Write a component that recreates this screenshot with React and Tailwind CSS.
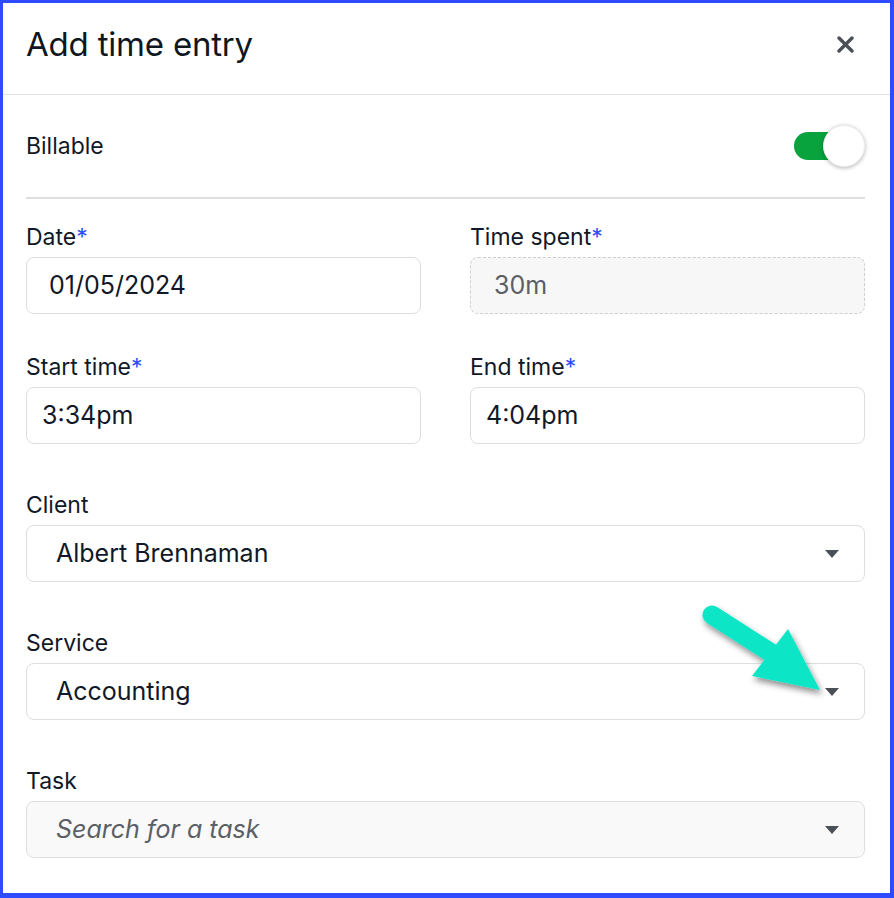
function Label({ children, required }) {
  return (
    <div className="text-[23px] leading-[28px] text-[#111827] mb-[6px]">
      {children}
      {required && <span className="text-[#2f4bff]">*</span>}
    </div>
  );
}

function Caret() {
  return (
    <svg width="14" height="8" viewBox="0 0 14 8" className="shrink-0">
      <path d="M0 0 L14 0 L7 8 Z" fill="#4b4f56" />
    </svg>
  );
}

function SelectBox({ value, placeholder, muted }) {
  return (
    <div
      className={`h-[57px] rounded-[8px] border border-[#dedede] flex items-center justify-between pl-[29px] pr-[25px] ${
        muted ? "bg-[#f9f9f9]" : "bg-white"
      }`}
    >
      {placeholder ? (
        <span className="text-[25px] italic text-[#5b5f66]">{placeholder}</span>
      ) : (
        <span className="text-[25px] text-[#111827]">{value}</span>
      )}
      <Caret />
    </div>
  );
}

export default function App() {
  return (
    <div
      className="w-[894px] h-[898px] bg-white border-[#2f4bff] border-t-[3px] border-l-[3px] border-r-[4px] border-b-[5px] relative overflow-hidden"
      style={{ fontFamily: "Inter, 'Noto Sans', sans-serif" }}
    >
      <div className="h-[92px] flex items-center justify-between pl-[23px] pr-[36px] pb-[8px] border-b border-[#e2e2e2]">
        <h1 className="text-[33px] text-[#0f1720] font-normal tracking-[-0.2px]">Add time entry</h1>
        <svg width="17" height="17" viewBox="0 0 17 17">
          <path d="M2 2 L15 15 M15 2 L2 15" stroke="#4b4f56" strokeWidth="3.4" strokeLinecap="round" />
        </svg>
      </div>

      <div className="pl-[23px] pr-[25px]">
        <div className="h-[104px] flex items-center justify-between border-b-2 border-[#dedede]">
          <span className="text-[23px] text-[#111827]">Billable</span>
          <div className="relative w-[71px] h-[42px] flex items-center">
            <div className="w-[56px] h-[28px] rounded-full bg-[#08a33c]" />
            <div className="absolute right-0 top-0 w-[42px] h-[42px] rounded-full bg-white shadow-[0_1px_4px_rgba(0,0,0,0.3)] border border-[#eeeeee]" />
          </div>
        </div>

        <div className="grid grid-cols-2 gap-x-[49px] pt-[24px]">
          <div>
            <Label required>Date</Label>
            <div className="h-[57px] rounded-[8px] border border-[#dedede] flex items-center pl-[22px] text-[25px] text-[#111827]">
              01/05/2024
            </div>
          </div>
          <div>
            <Label required>Time spent</Label>
            <div className="h-[57px] rounded-[8px] border border-dashed border-[#cfcfcf] bg-[#f7f7f7] flex items-center pl-[23px] text-[25px] text-[#5b5f66]">
              30m
            </div>
          </div>
        </div>

        <div className="grid grid-cols-2 gap-x-[49px] pt-[39px]">
          <div>
            <Label required>Start time</Label>
            <div className="h-[57px] rounded-[8px] border border-[#dedede] flex items-center pl-[15px] text-[25px] text-[#111827]">
              3:34pm
            </div>
          </div>
          <div>
            <Label required>End time</Label>
            <div className="h-[57px] rounded-[8px] border border-[#dedede] flex items-center pl-[15px] text-[25px] text-[#111827]">
              4:04pm
            </div>
          </div>
        </div>

        <div className="pt-[47px]">
          <Label>Client</Label>
          <SelectBox value="Albert Brennaman" />
        </div>

        <div className="pt-[47px]">
          <Label>Service</Label>
          <SelectBox value="Accounting" />
        </div>

        <div className="pt-[47px]">
          <Label>Task</Label>
          <SelectBox placeholder="Search for a task" muted />
        </div>
      </div>

      <svg
        className="absolute left-0 top-0 pointer-events-none"
        width="894"
        height="898"
        viewBox="0 0 894 898"
      >
        <defs>
          <filter id="sh" x="-20%" y="-20%" width="150%" height="150%">
            <feDropShadow dx="2" dy="4" stdDeviation="3" floodColor="#000" floodOpacity="0.45" />
          </filter>
        </defs>
        <g filter="url(#sh)" transform="translate(-3,-3)">
          <line x1="712" y1="615" x2="790" y2="665" stroke="#0ee6c6" strokeWidth="19" strokeLinecap="round" />
          <polygon points="788,629 752,676 820,690" fill="#0ee6c6" />
        </g>
      </svg>
    </div>
  );
}
